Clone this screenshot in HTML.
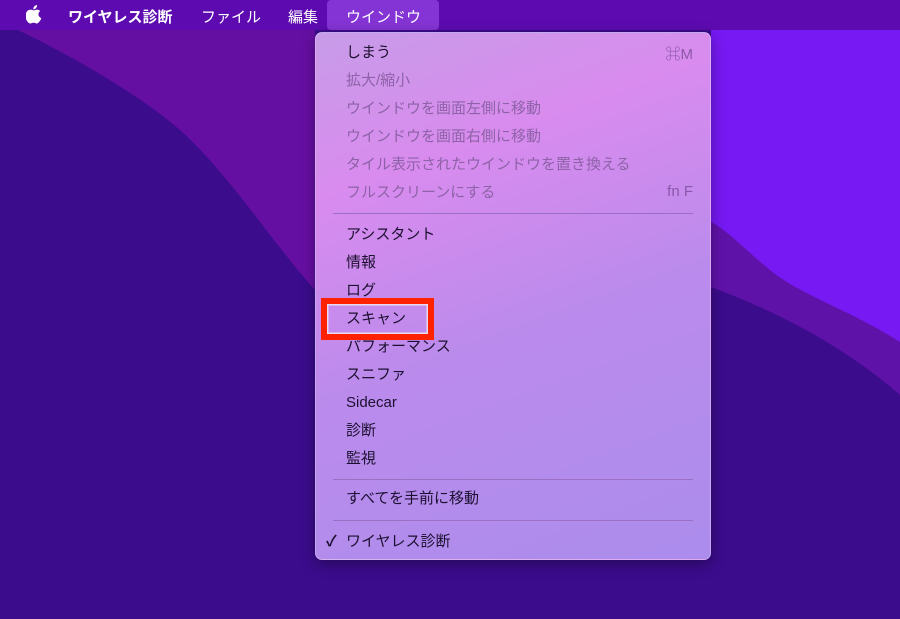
<!DOCTYPE html>
<html><head><meta charset="utf-8"><style>
*{margin:0;padding:0;box-sizing:border-box}
body{width:900px;height:619px;overflow:hidden;position:relative;font-family:"Liberation Sans","Noto Sans CJK JP",sans-serif;background:#3b0c8c}
svg.bg{position:absolute;left:0;top:0}
.bar{position:absolute;left:0;top:0;width:900px;height:30px;background:#5d0bb0;color:#fff;font-size:15px}
.bar span{position:absolute;top:6px}
.hl{position:absolute;left:327px;top:0;width:112px;height:30px;background:#8434d4;border-radius:4px}
.menu{position:absolute;left:315px;top:32px;width:396px;height:528px;border-radius:7px;background:linear-gradient(160deg,#c79ce8 0%,#d98bee 25%,#bb8bec 55%,#ab8cec 100%);box-shadow:0 4px 14px rgba(0,0,0,.35);border:1px solid rgba(255,255,255,.25)}
.it{position:absolute;left:30px;font-size:15px;color:#1c1030;line-height:20px}
.dis{color:#8e62a8}
.sc{position:absolute;right:17px;font-size:15px;color:#8a58a8}
.sep{position:absolute;left:17px;right:17px;height:1px;background:#9a6fc4}
.red{position:absolute;left:321px;top:298px;width:113px;height:42px;border:6px solid #ff2200;box-shadow:inset 0 0 0 1.5px #e8d8f0}
</style></head><body>
<svg class="bg" width="900" height="619">
<rect width="900" height="619" fill="#3b0c8c"/>
<path d="M18 30 C70 55 140 95 180 130 C230 175 270 240 315 290 L315 30 Z" fill="#650fa2"/>
<path d="M711 30 L900 30 L900 395 C860 360 800 320 711 287 Z" fill="#5f12a8"/>
<path d="M711 30 L900 30 L900 342 C850 310 800 295 770 270 C745 250 730 232 711 222 Z" fill="#7619f2"/>
</svg>
<div class="bar">
<svg style="position:absolute;left:26px;top:5px" width="16" height="19" viewBox="0 0 16 19"><path fill="#fff" d="M11 0c.2 1.2-.3 2.3-1 3.1-.7.8-1.7 1.3-2.7 1.2-.1-1.1.4-2.3 1.1-3C9.1.6 10.1.1 11 0zM15.3 13.5c-.4 1-.7 1.4-1.3 2.3-.8 1.2-1.9 2.7-3.3 2.7-1.2 0-1.5-.8-3.2-.8s-2 .8-3.2.8C2.9 18.5 1.900 17.2 1 16-1.3 12.6-.5 7.6 1.4 5.9 2.4 5 3.6 4.6 4.7 4.6c1.2 0 2 .8 3.2.8 1.1 0 1.8-.8 3.3-.8 1 0 2.2.5 3 1.5-2.6 1.5-2.2 5.3.1 6.4z"/></svg>
<span style="left:68px;font-weight:bold">ワイヤレス診断</span>
<span style="left:201px">ファイル</span>
<span style="left:288px">編集</span>
<div class="hl"></div>
<span style="left:346px">ウインドウ</span>
</div>
<div class="menu">
<div class="it" style="top:10px">しまう</div><div class="sc" style="top:10px">⌘M</div>
<div class="it dis" style="top:38px">拡大/縮小</div>
<div class="it dis" style="top:66px">ウインドウを画面左側に移動</div>
<div class="it dis" style="top:94px">ウインドウを画面右側に移動</div>
<div class="it dis" style="top:122px">タイル表示されたウインドウを置き換える</div>
<div class="it dis" style="top:150px">フルスクリーンにする</div><div class="sc" style="top:150px">fn F</div>
<div class="sep" style="top:180px"></div>
<div class="it" style="top:192px">アシスタント</div>
<div class="it" style="top:220px">情報</div>
<div class="it" style="top:248px">ログ</div>
<div class="it" style="top:276px">スキャン</div>
<div class="it" style="top:304px">パフォーマンス</div>
<div class="it" style="top:332px">スニファ</div>
<div class="it" style="top:360px">Sidecar</div>
<div class="it" style="top:388px">診断</div>
<div class="it" style="top:416px">監視</div>
<div class="sep" style="top:446px"></div>
<div class="it" style="top:456px">すべてを手前に移動</div>
<div class="sep" style="top:487px"></div>
<div class="it" style="top:499px;left:10px;font-weight:bold">✓</div>
<div class="it" style="top:499px">ワイヤレス診断</div>
</div>
<div class="red"></div>
</body></html>
